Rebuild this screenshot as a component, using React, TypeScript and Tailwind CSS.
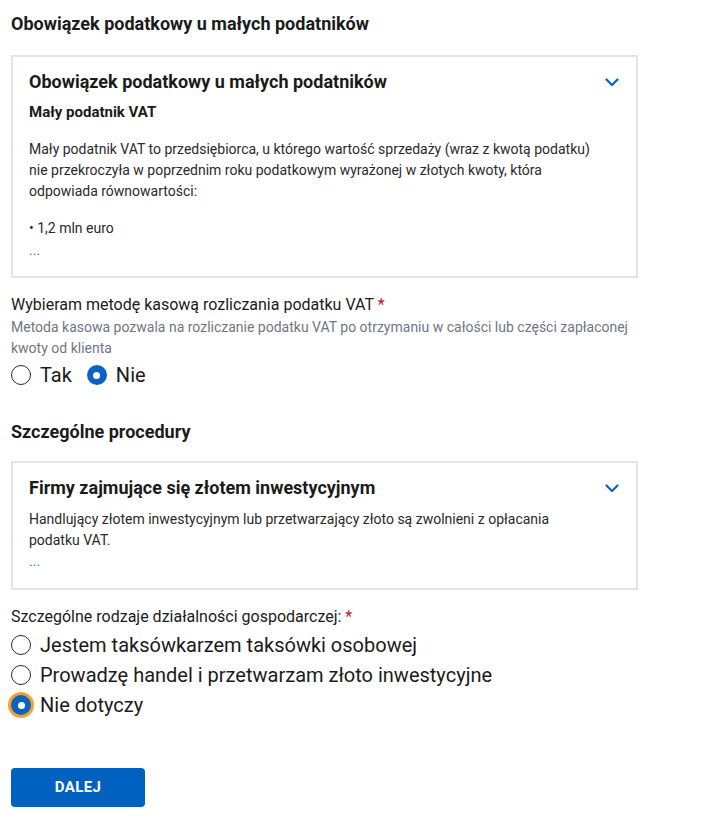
import React from 'react';

const font = { fontFamily: 'Roboto, "Noto Sans", sans-serif' };

function Chevron() {
  return (
    <svg width="14" height="9" viewBox="0 0 14 9" className="shrink-0">
      <path d="M1.5 1.5 L7 7 L12.5 1.5" fill="none" stroke="#0b62c4" strokeWidth="2.2" strokeLinecap="round" strokeLinejoin="round" />
    </svg>
  );
}

function Radio({ label, checked, focused }: { label: string; checked?: boolean; focused?: boolean }) {
  return (
    <label className="flex items-center gap-[9px] h-[30px] cursor-pointer">
      {checked ? (
        <span
          className={
            'w-[20px] h-[20px] rounded-full bg-[#0b62c4] flex items-center justify-center shrink-0 ' +
            (focused ? 'ring-[3px] ring-[#f2a22c]' : '')
          }
        >
          <span className="w-[7px] h-[7px] rounded-full bg-white" />
        </span>
      ) : (
        <span className="w-[20px] h-[20px] rounded-full border-[1.5px] border-[#2b2b2b] bg-white shrink-0" />
      )}
      <span className="text-[20px] leading-[24px] text-[#1b1b1b]">{label}</span>
    </label>
  );
}

function InfoBox({ title, pb, children }: { title: string; pb: string; children: React.ReactNode }) {
  return (
    <div className={'border-2 border-[#e3e3e3] pl-4 pr-[17px] pt-3 ' + pb}>
      <div className="flex items-center justify-between">
        <h3 className="text-[18px] leading-[26px] font-bold text-[#1b1b1b]">{title}</h3>
        <Chevron />
      </div>
      {children}
    </div>
  );
}

export default function App() {
  return (
    <div className="bg-white min-h-screen px-[11px] pt-3 pb-6" style={font}>
      <div className="w-[627px]">
        <h2 className="text-[18px] leading-[24px] font-bold text-[#1b1b1b]">
          Obowiązek podatkowy u małych podatników
        </h2>

        <div className="mt-[19px]">
          <InfoBox title="Obowiązek podatkowy u małych podatników" pb="pb-[15px]">
            <p className="mt-[7px] text-[15px] leading-[20px] font-bold text-[#1b1b1b]">Mały podatnik VAT</p>
            <p className="mt-[17px] text-[14px] leading-[21px] text-[#2a2a2a]">
              Mały podatnik VAT to przedsiębiorca, u którego wartość sprzedaży (wraz z kwotą podatku)
              <br />
              nie przekroczyła w poprzednim roku podatkowym wyrażonej w złotych kwoty, która
              <br />
              odpowiada równowartości:
            </p>
            <p className="mt-[16px] text-[14px] leading-[21px] text-[#2a2a2a]">• 1,2 mln euro</p>
            <p className="mt-[1px] text-[14px] leading-[21px] text-[#6b6b6b]">...</p>
          </InfoBox>
        </div>

        <p className="mt-[15px] text-[16px] leading-[24px] text-[#1b1b1b]">
          Wybieram metodę kasową rozliczania podatku VAT <span className="text-[#c8102e]">*</span>
        </p>
        <p className="text-[14px] leading-[21px] text-[#6f7782]">
          Metoda kasowa pozwala na rozliczanie podatku VAT po otrzymaniu w całości lub części zapłaconej kwoty od klienta
        </p>
        <div className="mt-[1px] flex items-center gap-[15px]">
          <Radio label="Tak" />
          <Radio label="Nie" checked />
        </div>

        <h2 className="mt-[30px] text-[18px] leading-[24px] font-bold text-[#1b1b1b]">Szczególne procedury</h2>

        <div className="mt-[17px]">
          <InfoBox title="Firmy zajmujące się złotem inwestycyjnym" pb="pb-[16px]">
            <p className="mt-[8px] text-[14px] leading-[21px] text-[#2a2a2a]">
              Handlujący złotem inwestycyjnym lub przetwarzający złoto są zwolnieni z opłacania
              <br />
              podatku VAT.
            </p>
            <p className="text-[14px] leading-[21px] text-[#3d6fb0]">...</p>
          </InfoBox>
        </div>

        <p className="mt-[15px] text-[16px] leading-[24px] text-[#1b1b1b]">
          Szczególne rodzaje działalności gospodarczej: <span className="text-[#c8102e]">*</span>
        </p>
        <div className="mt-[1px] flex flex-col">
          <Radio label="Jestem taksówkarzem taksówki osobowej" />
          <Radio label="Prowadzę handel i przetwarzam złoto inwestycyjne" />
          <Radio label="Nie dotyczy" checked focused />
        </div>

        <button className="mt-[48px] w-[134px] h-[39px] rounded bg-[#0061c1] text-white text-[15px] font-bold tracking-wide">
          DALEJ
        </button>
      </div>
    </div>
  );
}
